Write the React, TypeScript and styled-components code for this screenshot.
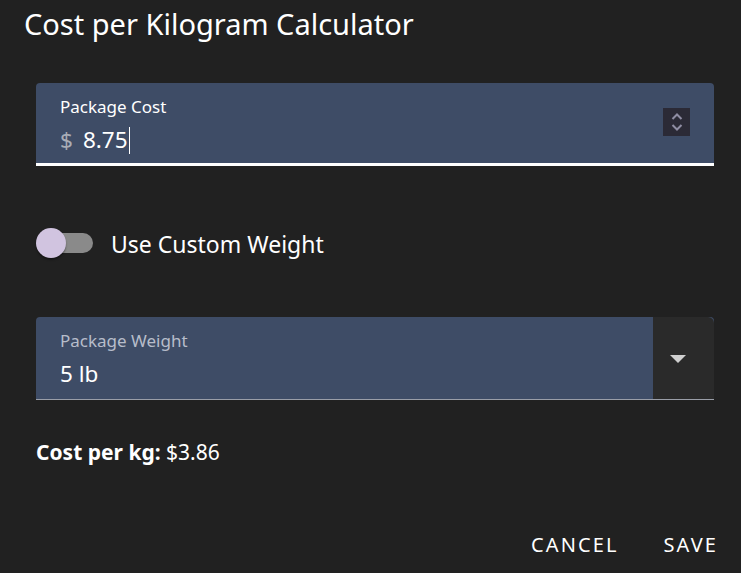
import React from 'react'
import styled, { createGlobalStyle } from 'styled-components'

const GlobalStyle = createGlobalStyle`
  html, body {
    margin: 0;
    padding: 0;
    background: #212121;
  }
  body {
    font-family: 'Noto Sans', 'Open Sans', sans-serif;
    color: #ffffff;
  }
`

const Dialog = styled.div`
  width: 741px;
  height: 573px;
  box-sizing: border-box;
  background: #212121;
  display: flex;
  flex-direction: column;
`

const Title = styled.h2`
  margin: 0;
  padding: 5px 24px 0;
  font-size: 29px;
  font-weight: 400;
  line-height: 38px;
`

const Content = styled.div`
  padding: 40px 27px 0 36px;
  display: flex;
  flex-direction: column;
`

const Field = styled.div<{ $focused?: boolean }>`
  position: relative;
  display: flex;
  height: ${(p) => (p.$focused ? '80px' : '82px')};
  background: #3e4c66;
  border-bottom: ${(p) => (p.$focused ? '3px solid #ffffff' : '1px solid #9a9ea8')};
  border-radius: 4px 4px 0 0;
`

const FieldBody = styled.div`
  flex: 1;
  padding: 12px 24px 0;
  display: flex;
  flex-direction: column;
`

const Label = styled.label<{ $muted?: boolean }>`
  font-size: 17px;
  line-height: 24px;
  color: ${(p) => (p.$muted ? '#b7bdca' : '#ffffff')};
`

const ValueRow = styled.div`
  display: flex;
  align-items: center;
  margin-top: 6px;
  font-size: 22.5px;
  line-height: 30px;
`

const Prefix = styled.span`
  color: #a9adb6;
  margin-right: 10px;
`

const Caret = styled.span`
  display: inline-block;
  width: 1px;
  height: 27px;
  background: #ffffff;
  margin-left: 1px;
`

const Spinner = styled.div`
  align-self: center;
  margin: 0 24px 2px 0;
  width: 27px;
  height: 28px;
  background: #2b2a36;
  display: flex;
  align-items: center;
  justify-content: center;
`

const SelectButton = styled.div`
  width: 61px;
  box-sizing: border-box;
  padding: 2px 0 0 17px;
  background: #2a2a2a;
  border-radius: 0 6px 0 0;
  display: flex;
  align-items: center;
`

const SwitchRow = styled.div`
  display: flex;
  align-items: center;
  margin: 61px 0 58px;
  gap: 16px;
`

const SwitchBox = styled.div`
  position: relative;
  width: 59px;
  height: 30px;
`

const Track = styled.div`
  position: absolute;
  left: 6px;
  right: 2px;
  top: 5px;
  height: 20px;
  border-radius: 10px;
  background: #8a8a8a;
`

const Thumb = styled.div`
  position: absolute;
  left: 0;
  top: 0;
  width: 30px;
  height: 30px;
  border-radius: 50%;
  background: #d1c4e0;
  box-shadow: 0 2px 2px rgba(0, 0, 0, 0.35);
`

const SwitchLabel = styled.span`
  font-size: 23px;
  line-height: 30px;
  margin-top: 2px;
`

const Result = styled.p`
  margin: 38px 0 0;
  font-size: 21px;
  line-height: 28px;

  strong {
    font-weight: 700;
  }
`

const Actions = styled.div`
  margin-top: auto;
  display: flex;
  justify-content: flex-end;
  gap: 23px;
  padding: 0 12px 9px;
`

const TextButton = styled.button`
  background: none;
  border: none;
  color: #ffffff;
  font-family: inherit;
  font-size: 20px;
  letter-spacing: 2.1px;
  text-transform: uppercase;
  padding: 6px 11px;
  line-height: 26px;
  cursor: pointer;
`

const App: React.FC = () => (
  <Dialog>
    <GlobalStyle />
    <Title>Cost per Kilogram Calculator</Title>
    <Content>
      <Field $focused>
        <FieldBody>
          <Label>Package Cost</Label>
          <ValueRow>
            <Prefix>$</Prefix>
            8.75
            <Caret />
          </ValueRow>
        </FieldBody>
        <Spinner>
          <svg width="14" height="20" viewBox="0 0 14 20" fill="none" stroke="#8f8da3" strokeWidth="2">
            <polyline points="2.5,7 7,2.5 11.5,7" />
            <polyline points="2.5,13 7,17.5 11.5,13" />
          </svg>
        </Spinner>
      </Field>

      <SwitchRow>
        <SwitchBox>
          <Track />
          <Thumb />
        </SwitchBox>
        <SwitchLabel>Use Custom Weight</SwitchLabel>
      </SwitchRow>

      <Field>
        <FieldBody>
          <Label $muted>Package Weight</Label>
          <ValueRow>5 lb</ValueRow>
        </FieldBody>
        <SelectButton>
          <svg width="16" height="8" viewBox="0 0 16 8">
            <polygon points="0,0 16,0 8,8" fill="#cfcfcf" />
          </svg>
        </SelectButton>
      </Field>

      <Result>
        <strong>Cost per kg:</strong> $3.86
      </Result>
    </Content>
    <Actions>
      <TextButton>Cancel</TextButton>
      <TextButton>Save</TextButton>
    </Actions>
  </Dialog>
)

export default App
